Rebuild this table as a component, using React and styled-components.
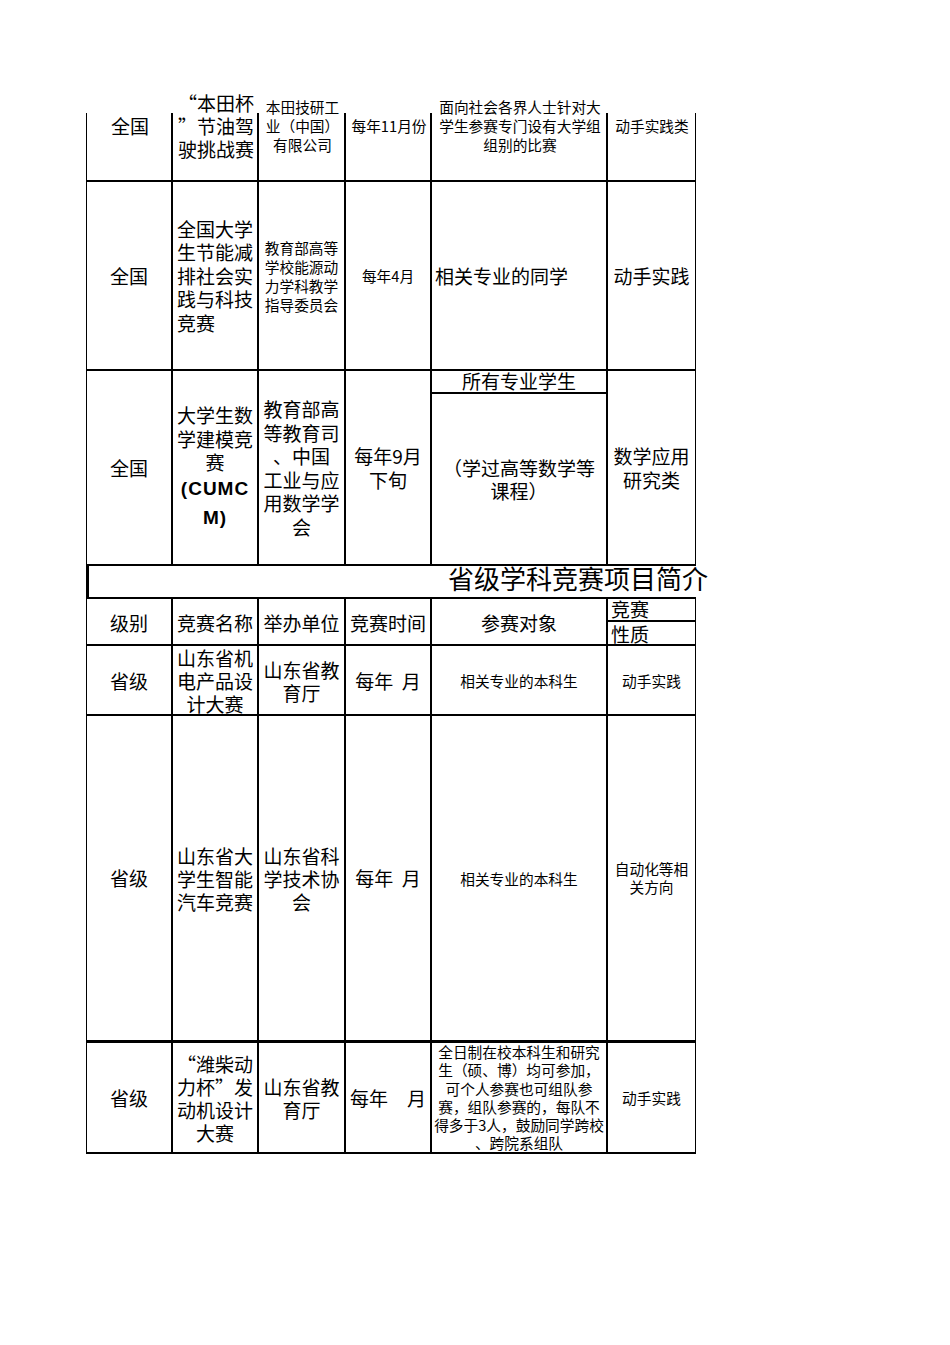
import React from "react";
import styled, { createGlobalStyle, css } from "styled-components";

const GlobalStyle = createGlobalStyle`
  * { box-sizing: border-box; }
  body {
    margin: 0;
    background: #fff;
    color: #000;
    font-family: "Noto Sans CJK SC", "Liberation Serif", sans-serif;
  }
`;

const COLS = "86px 86px 87px 86px 176px 88px";

const Sheet = styled.div`
  width: 696px;
  padding: 71px 0 40px 86px;
`;

// one spreadsheet row; $cut = px at the top where the vertical rules are missing
const Row = styled.div`
  display: grid;
  grid-template-columns: ${COLS};
  height: ${(p) => p.$h}px;
  border-bottom: ${(p) => p.$bottom || 2}px solid #000;
  ${(p) =>
    p.$cut
      ? css`
          padding-left: 1px;
          background: linear-gradient(#000, #000) left bottom / 1px
            calc(100% - ${p.$cut}px) no-repeat;
        `
      : css`
          border-left: 1px solid #000;
        `}
`;

const Cell = styled.div`
  display: flex;
  flex-direction: column;
  justify-content: center;
  align-items: ${(p) => (p.$align === "left" ? "flex-start" : "center")};
  padding: 0 ${(p) => (p.$align === "left" ? "3px" : "0")};
  text-align: ${(p) => (p.$align === "left" || p.$align === "block" ? "left" : "center")};
  white-space: pre;
  font-size: ${(p) => (p.$small ? "14.7px" : "19px")};
  line-height: ${(p) => p.$lh || (p.$small ? 19 : 23.5)}px;
  min-width: 0;
  ${(p) =>
    p.$cut
      ? css`
          background: linear-gradient(#000, #000) right bottom / 2px
            calc(100% - ${p.$cut}px) no-repeat;
          &:last-child {
            background-size: 1px calc(100% - ${p.$cut}px);
          }
        `
      : css`
          border-right: 2px solid #000;
          &:last-child {
            border-right-width: 1px;
          }
        `}
`;

const SplitCell = styled.div`
  display: flex;
  flex-direction: column;
  border-right: 2px solid #000;
  &:last-child {
    border-right-width: 1px;
  }
`;

const SubCell = styled.div`
  display: flex;
  flex-direction: column;
  justify-content: center;
  align-items: ${(p) => (p.$align === "left" ? "flex-start" : "center")};
  padding: 0 ${(p) => (p.$align === "left" ? "3px" : "0")};
  white-space: pre;
  text-align: center;
  font-size: 19px;
  line-height: 23.5px;
  ${(p) =>
    p.$h
      ? css`
          height: ${p.$h}px;
          line-height: 19px;
          padding-bottom: 3px;
          border-bottom: 2px solid #000;
        `
      : css`
          flex: 1;
        `}
`;

const Latin = styled.span`
  font-family: "Liberation Sans", sans-serif;
  font-weight: 700;
  letter-spacing: 1px;
  line-height: 29px;
`;

const Spread = styled.div`
  display: flex;
  justify-content: space-between;
  width: 100%;
  padding: 0 4px;
  font-size: 19px;
`;

const TitleBar = styled.div`
  height: 33px;
  border-left: 3px solid #000;
  border-bottom: 2px solid #000;
  display: flex;
  justify-content: flex-end;
  align-items: flex-start;
`;

const TitleText = styled.div`
  font-size: 26px;
  line-height: 28px;
  margin: -2px -12px 0 0;
  white-space: nowrap;
`;

export default function App() {
  return (
    <>
      <GlobalStyle />
      <Sheet>
        <Row $h={111} $cut={42}>
          <Cell $cut={42}>全国</Cell>
          <Cell $cut={42} $lh={23}>{"“本田杯\n”节油驾\n驶挑战赛"}</Cell>
          <Cell $cut={42} $small>{"本田技研工\n业（中国）\n有限公司"}</Cell>
          <Cell $cut={42} $small>每年11月份</Cell>
          <Cell $cut={42} $small>{"面向社会各界人士针对大\n学生参赛专门设有大学组\n组别的比赛"}</Cell>
          <Cell $cut={42} $small>动手实践类</Cell>
        </Row>

        <Row $h={189}>
          <Cell>全国</Cell>
          <Cell $align="block">{"全国大学\n生节能减\n排社会实\n践与科技\n竞赛"}</Cell>
          <Cell $small>{"教育部高等\n学校能源动\n力学科教学\n指导委员会"}</Cell>
          <Cell $small>每年4月</Cell>
          <Cell $align="left">相关专业的同学</Cell>
          <Cell>动手实践</Cell>
        </Row>

        <Row $h={195}>
          <Cell>全国</Cell>
          <Cell>
            {"大学生数\n学建模竞\n赛\n"}
            <Latin>{"(CUMC\nM)"}</Latin>
          </Cell>
          <Cell>{"教育部高\n等教育司\n、中国\n工业与应\n用数学学\n会"}</Cell>
          <Cell>{"每年9月\n下旬"}</Cell>
          <SplitCell>
            <SubCell $h={23}>所有专业学生</SubCell>
            <SubCell>{"（学过高等数学等\n课程）"}</SubCell>
          </SplitCell>
          <Cell>{"数学应用\n研究类"}</Cell>
        </Row>

        <TitleBar>
          <TitleText>省级学科竞赛项目简介</TitleText>
        </TitleBar>

        <Row $h={47}>
          <Cell>级别</Cell>
          <Cell>竞赛名称</Cell>
          <Cell>举办单位</Cell>
          <Cell>竞赛时间</Cell>
          <Cell>参赛对象</Cell>
          <SplitCell>
            <SubCell $h={23} $align="left">竞赛</SubCell>
            <SubCell $align="left">性质</SubCell>
          </SplitCell>
        </Row>

        <Row $h={70}>
          <Cell>省级</Cell>
          <Cell $lh={23}>{"山东省机\n电产品设\n计大赛"}</Cell>
          <Cell $lh={23}>{"山东省教\n育厅"}</Cell>
          <Cell>{"每年  月"}</Cell>
          <Cell $small>相关专业的本科生</Cell>
          <Cell $small>动手实践</Cell>
        </Row>

        <Row $h={327} $bottom={3}>
          <Cell>省级</Cell>
          <Cell $lh={23}>{"山东省大\n学生智能\n汽车竞赛"}</Cell>
          <Cell $lh={23}>{"山东省科\n学技术协\n会"}</Cell>
          <Cell>{"每年  月"}</Cell>
          <Cell $small>相关专业的本科生</Cell>
          <Cell $small $lh={18}>{"自动化等相\n关方向"}</Cell>
        </Row>

        <Row $h={111}>
          <Cell>省级</Cell>
          <Cell $lh={23}>{"“潍柴动\n力杯”发\n动机设计\n大赛"}</Cell>
          <Cell $lh={23}>{"山东省教\n育厅"}</Cell>
          <Cell>
            <Spread>
              <span>每年</span>
              <span>月</span>
            </Spread>
          </Cell>
          <Cell $small $lh={18.3}>
            {"全日制在校本科生和研究\n生（硕、博）均可参加，\n可个人参赛也可组队参\n赛，组队参赛的，每队不\n得多于3人，鼓励同学跨校\n、跨院系组队"}
          </Cell>
          <Cell $small>动手实践</Cell>
        </Row>
      </Sheet>
    </>
  );
}
